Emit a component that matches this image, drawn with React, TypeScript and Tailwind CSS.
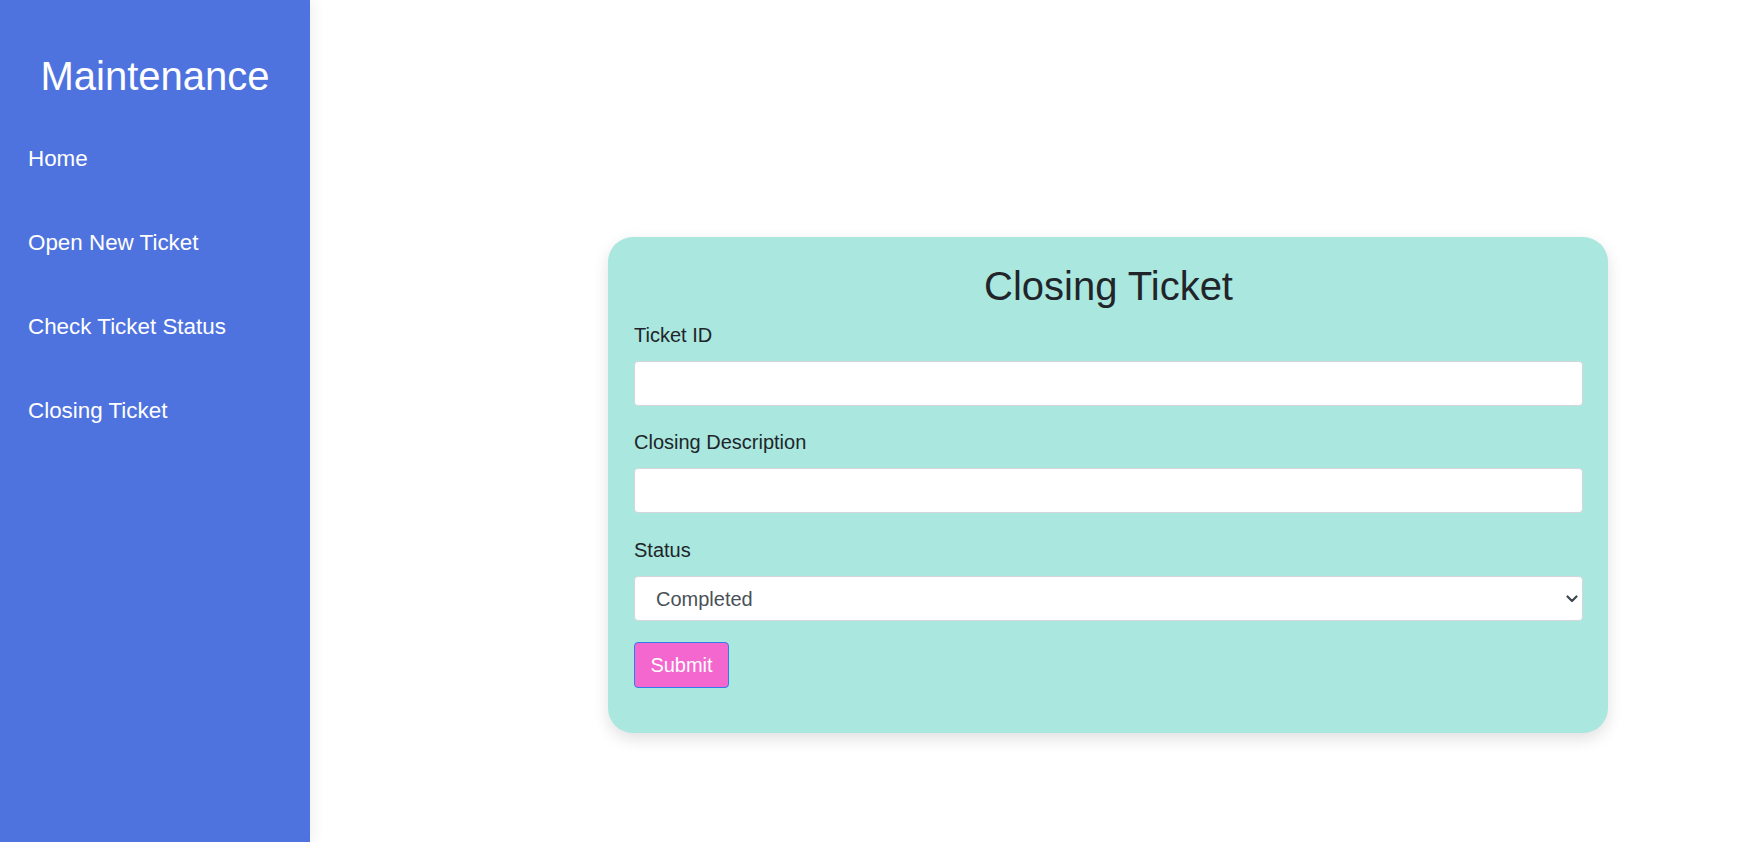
import React from 'react';

const navItems = ['Home', 'Open New Ticket', 'Check Ticket Status', 'Closing Ticket'];

const Sidebar: React.FC = () => (
  <aside className="relative z-10 flex h-screen w-[310px] shrink-0 flex-col bg-[#4e73df] pt-[53px] text-white shadow-[4px_0_12px_rgba(0,0,0,0.06)]">
    <h1 className="text-center text-[40px] font-normal leading-[46px]">Maintenance</h1>
    <nav className="mt-[47px] flex flex-col gap-[58px] pl-[28px]">
      {navItems.map((item) => (
        <a key={item} href="#" className="text-[22.4px] leading-[26px] text-white">
          {item}
        </a>
      ))}
    </nav>
  </aside>
);

const Field: React.FC<{ label: string; children: React.ReactNode; className?: string }> = ({ label, children, className }) => (
  <div className={className}>
    <label className="block text-[20px] leading-[24px] text-[#212529]">{label}</label>
    <div className="mt-[14px]">{children}</div>
  </div>
);

export default function App() {
  return (
    <div className="flex min-h-screen bg-white font-['Liberation_Sans',Arial,sans-serif]">
      <Sidebar />
      <main className="flex-1 pl-[298px] pt-[237px]">
        <div className="w-[1000px] rounded-[25px] bg-[#a9e7df] pb-[45px] pl-[26px] pr-[25px] pt-[26px] shadow-[0_6px_16px_rgba(0,0,0,0.12)]">
          <h2 className="text-center text-[40px] font-normal leading-[46px] text-[#212529]">Closing Ticket</h2>

          <Field label="Ticket ID" className="mt-[14px]">
            <input type="text" className="block h-[45px] w-full rounded-[4px] border border-[#d3d7db] bg-white px-3 text-[20px] focus:outline-none" />
          </Field>

          <Field label="Closing Description" className="mt-[24px]">
            <input type="text" className="block h-[45px] w-full rounded-[4px] border border-[#d3d7db] bg-white px-3 text-[20px] focus:outline-none" />
          </Field>

          <Field label="Status" className="mt-[25px]">
            <div className="relative">
              <select
                defaultValue="Completed"
                className="block h-[45px] w-full appearance-none rounded-[4px] border border-[#d3d7db] bg-white pl-[21px] text-[20px] text-[#495057] focus:outline-none"
              >
                <option>Completed</option>
                <option>Pending</option>
              </select>
              <svg
                className="pointer-events-none absolute right-[5px] top-[19px] h-[8px] w-[12px]"
                viewBox="0 0 12 8"
                fill="none"
                stroke="#3f4650"
                strokeWidth="2.2"
                strokeLinecap="round"
                strokeLinejoin="round"
              >
                <path d="M1.5 1.5 6 6l4.5-4.5" />
              </svg>
            </div>
          </Field>

          <button
            type="submit"
            className="mt-[21px] h-[46px] w-[95px] rounded-[4px] border border-[#2f7cf0] bg-[#f367ce] text-[20px] text-white"
          >
            Submit
          </button>
        </div>
      </main>
    </div>
  );
}
